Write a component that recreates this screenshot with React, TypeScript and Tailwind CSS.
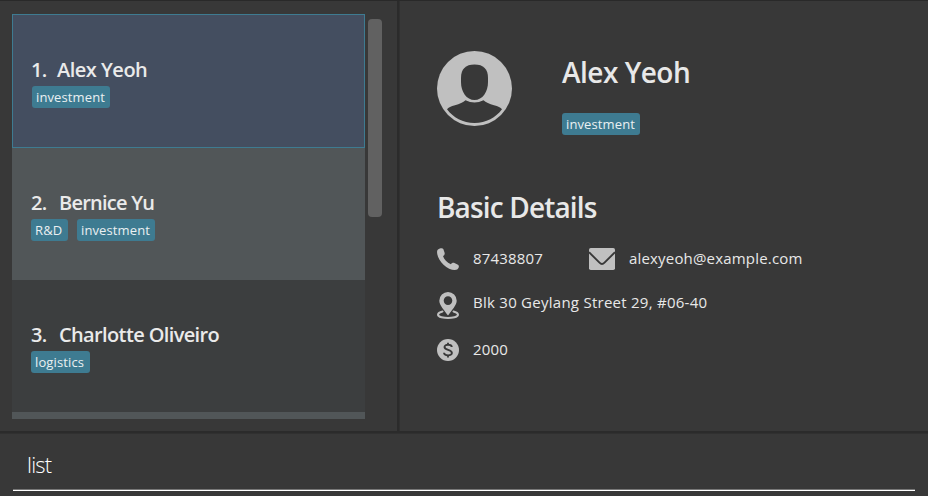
import type { ReactNode } from "react";

function Tag({ children, width }: { children: ReactNode; width: string }) {
  return (
    <span className={`flex h-[22px] items-center rounded-[3px] bg-[#3e7b91] pl-1 text-[13px] leading-none font-medium tracking-[0.12px] whitespace-nowrap text-[#eaf0f2] ${width}`}>
      {children}
    </span>
  );
}

function PersonCard({ index, name, indexClass, nameClass, children, className }: { index: number; name: string; indexClass: string; nameClass: string; children: ReactNode; className: string }) {
  return (
    <div className={`shrink-0 pl-[19px] ${className}`}>
      <div className="flex h-[30px] items-start text-[20px] leading-7 font-semibold whitespace-nowrap text-[#eaeaea]">
        <span className={`w-7 tracking-[-0.8px] ${indexClass}`}>{index}.</span>
        <span className={nameClass}>{name}</span>
      </div>
      <div className="flex gap-[9px]">{children}</div>
    </div>
  );
}

function Avatar() {
  return (
    <svg width="75" height="75" viewBox="0 0 75 75" className="mt-px block shrink-0">
      <circle cx="37.500" cy="37.500" r="37.500" fill="#c0c0c0" />
      <path d="M37.500 13.500C46.500 13.500 51 18 51 27V31C51 41 45.500 49 37.500 49C29.500 49 24 41 24 31V27C24 18 28.500 13.500 37.500 13.500Z" fill="#383838" />
      <path d="M28.500 49.300Q37.500 53.800 46.500 49.300Q50 52.500 57 54.300Q63 55.800 65 58.300C59 66.500 49 72 37.500 72C26 72 16 66.500 10 58.300Q12 55.800 18 54.300Q25 52.500 28.500 49.300Z" fill="#383838" />
    </svg>
  );
}

function PhoneIcon() {
  return (
    <svg width="22" height="22" viewBox="0 0 22 22" className="block">
      <path d="M1 1.500C3 0 5.500 -.4 6.300 1L7.600 4.700C8 6.600 7.200 7.500 6 8.100C7 11.500 10 14.800 13.900 16.200C14.800 14.900 16 14.400 17.500 15L21 16.700C22.500 17.800 22 20.200 20.200 21.500C17 23 11 21 6.500 16.700C2 12.500 -.8 6 .3 2.600Q.5 1.900 1 1.500Z" fill="#c0c0c0" />
    </svg>
  );
}

function MailIcon() {
  return (
    <svg width="26" height="22" viewBox="0 0 26 22" className="block">
      <rect width="26" height="22" rx="1.800" fill="#c0c0c0" />
      <path d="M0 4.200L10.500 14.700Q13 17.200 15.500 14.700L26 4.200" fill="none" stroke="#383838" strokeWidth="1.900" />
    </svg>
  );
}

function PinIcon() {
  return (
    <svg width="22" height="28" viewBox="0 0 22 28" className="block">
      <path fillRule="evenodd" d="M11 0A8.700 8.700 0 0 1 19.700 8.700C19.700 13 14.500 18.500 11 23.500C7.500 18.500 2.300 13 2.300 8.700A8.700 8.700 0 0 1 11 0ZM11 4.300A4.300 4.300 0 1 0 11 12.900A4.300 4.300 0 1 0 11 4.300Z" fill="#c0c0c0" />
      <path d="M5.500 19.500C-.2 20.800 -.3 24 4.500 25.200Q11 26.700 17.500 25.200C22.300 24 22.200 20.800 16.500 19.500" fill="none" stroke="#c0c0c0" strokeWidth="2" strokeLinecap="round" />
    </svg>
  );
}

function CoinIcon() {
  return (
    <svg width="22" height="22" viewBox="0 0 22 22" className="block">
      <circle cx="11" cy="11" r="11" fill="#c0c0c0" />
      <path d="M14.800 8C14.500 5 7.500 4.800 7.500 8.100C7.500 11.600 14.900 10.200 14.900 13.900C14.900 17.300 7.200 17.100 7 13.700M11 3.800V6M11 16V18.500" fill="none" stroke="#383838" strokeWidth="1.900" />
    </svg>
  );
}

export default function App() {
  return (
    <div className="flex h-[496px] w-[928px] flex-col overflow-hidden border-t border-[#292929] bg-[#383838] font-['Open_Sans','Noto_Sans',sans-serif]">
      <div className="flex h-[430px] shrink-0">
        <section className="flex w-[397px] shrink-0 pt-[13px] pl-3">
          <div className="flex h-[405px] w-[353px] flex-col overflow-hidden">
            <PersonCard index={1} name="Alex Yeoh" indexClass="-ml-px" nameClass="-ml-[2px] tracking-[-0.5px]" className="h-[134px] border border-[#3e7b91] bg-[#444e60] pt-[41px]">
              <Tag width="w-[78px]">investment</Tag>
            </PersonCard>
            <PersonCard index={2} name="Bernice Yu" indexClass="" nameClass="tracking-[-0.75px]" className="h-[132px] bg-[#515658] pt-[41px]">
              <Tag width="w-[37px]">R&amp;D</Tag>
              <Tag width="w-[78px]">investment</Tag>
            </PersonCard>
            <PersonCard index={3} name="Charlotte Oliveiro" indexClass="" nameClass="tracking-[-0.63px]" className="h-[132px] bg-[#3c3e3f] pt-[41px]">
              <Tag width="w-[59px]">logistics</Tag>
            </PersonCard>
            <div className="h-[7px] bg-[#515658]" />
          </div>
          <div className="mt-[5px] ml-[3px] h-[198px] w-[13.500px] rounded-[4px] bg-[#616161]" />
        </section>
        <div className="w-[3px] shrink-0 border-r border-[#303030] bg-[#2b2b2b]" />
        <section className="flex-1 pt-[49px] pl-[37px] text-[#e8e8e8]">
          <div className="flex h-[85px]">
            <Avatar />
            <div className="ml-[50px]">
              <h1 className="h-[63px] text-[28px] leading-[44px] font-semibold tracking-[-0.5px] whitespace-nowrap">Alex Yeoh</h1>
              <Tag width="w-[78px]">investment</Tag>
            </div>
          </div>
          <h2 className="mt-[50px] h-11 text-[28px] leading-[44px] font-semibold tracking-[-0.85px] whitespace-nowrap">Basic Details</h2>
          <div className="mt-[19px] flex h-[22px] items-start text-[15px] leading-5 whitespace-nowrap">
            <PhoneIcon />
            <span className="ml-[14px] w-[116px] tracking-[0.18px]">87438807</span>
            <MailIcon />
            <span className="ml-[14px] tracking-[0.18px]">alexyeoh@example.com</span>
          </div>
          <div className="mt-[22px] flex h-7 text-[15px] whitespace-nowrap">
            <PinIcon />
            <span className="ml-[14px] leading-5 tracking-[0.26px]">Blk 30 Geylang Street 29, #06-40</span>
          </div>
          <div className="mt-[19px] flex h-[22px] items-start text-[15px] leading-5 whitespace-nowrap">
            <CoinIcon />
            <span className="ml-[14px] tracking-[0.18px]">2000</span>
          </div>
        </section>
      </div>
      <div className="h-[3px] shrink-0 border-b border-[#303030] bg-[#2b2b2b]" />
      <div className="mr-[13px] ml-[13px] h-[57px] border-b border-white pt-[14px] pl-[14px] text-[22px] leading-[32px] font-light tracking-[-0.8px] text-white">
        <span className="block">list</span>
        <div className="mt-[9px] -ml-[14px] h-px bg-[#777]" />
      </div>
    </div>
  );
}
